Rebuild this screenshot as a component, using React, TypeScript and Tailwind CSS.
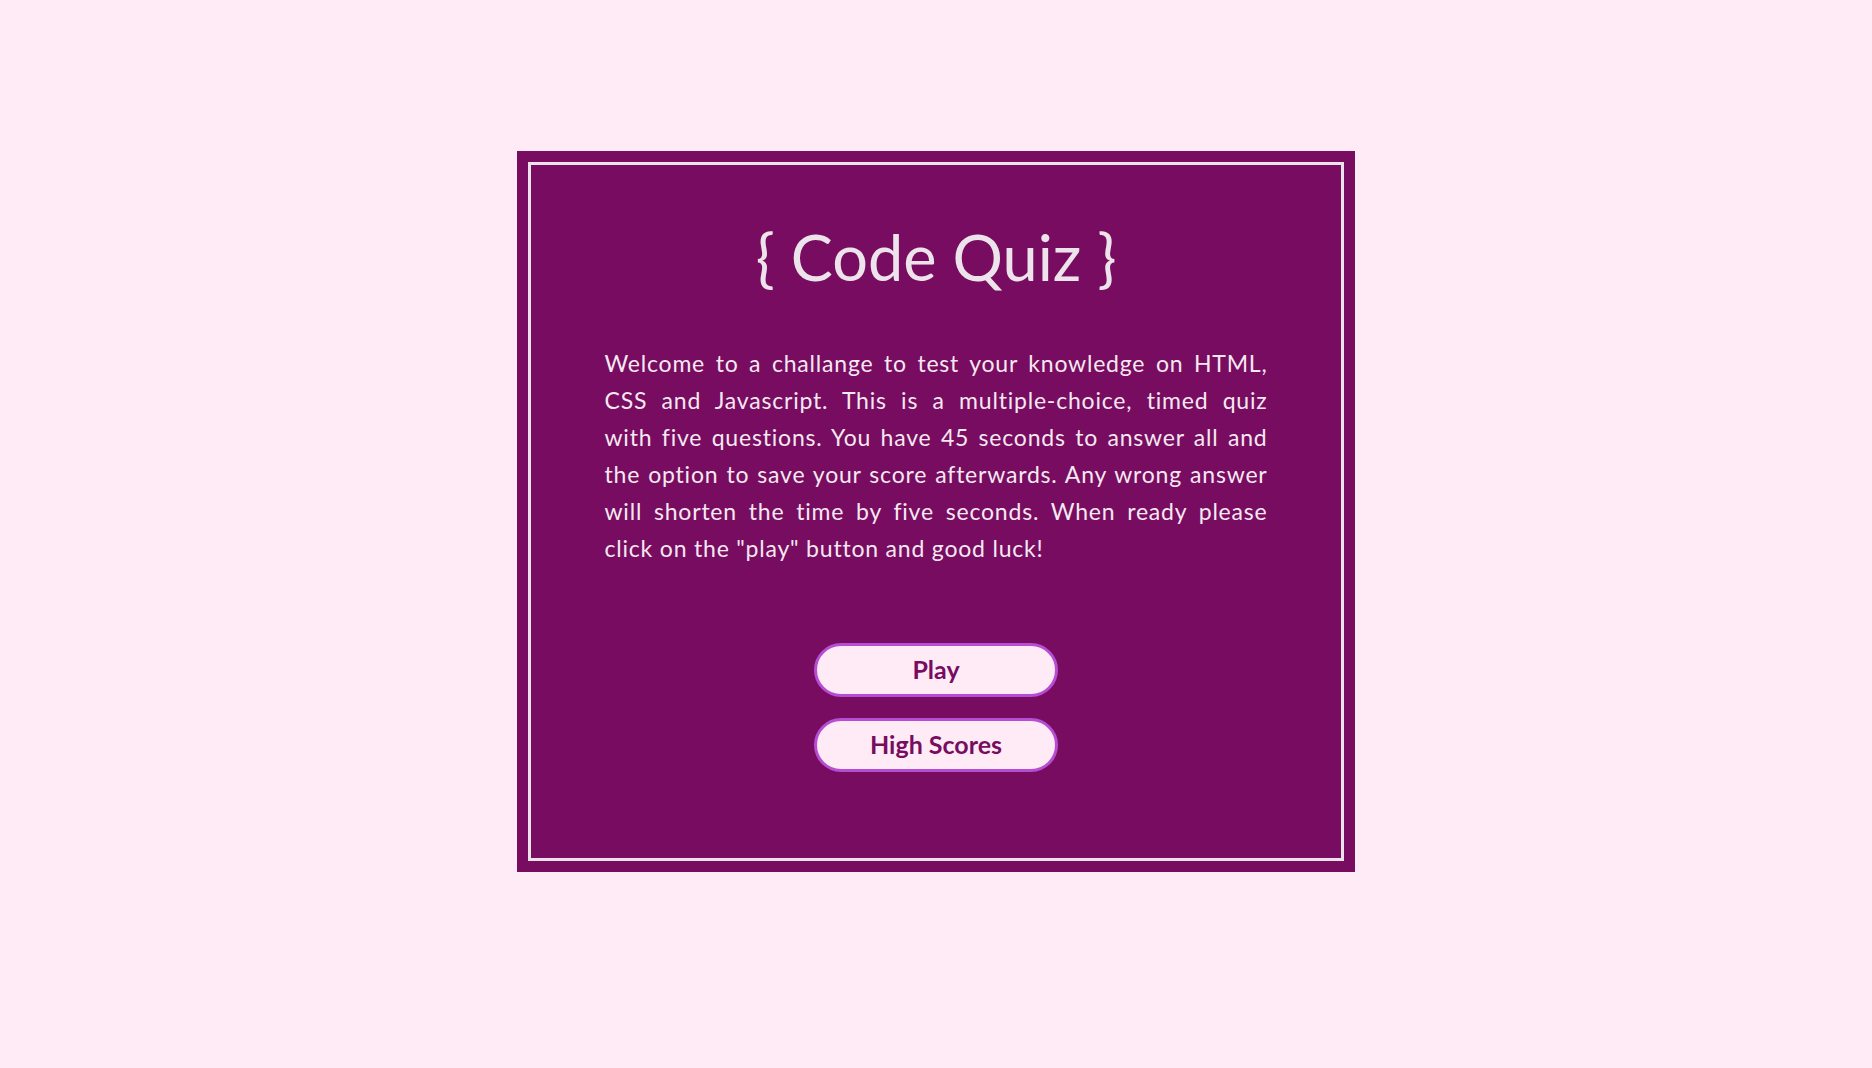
import React from 'react';

// Lines broken as in the design so the justified block wraps the same way
const INTRO_LINES = [
  'Welcome to a challange to test your knowledge on HTML,',
  'CSS and Javascript. This is a multiple-choice, timed quiz',
  'with five questions. You have 45 seconds to answer all and',
  'the option to save your score afterwards. Any wrong answer',
  'will shorten the time by five seconds. When ready please',
  'click on the "play" button and good luck!',
];

export default function App() {
  return (
    <div className="min-h-screen w-full bg-[#ffebf6] flex justify-center pt-[151px] font-['Lato',sans-serif]">
      <div className="w-[838px] h-[721px] bg-[#770c60] p-[11px]">
        {/* Inner frame */}
        <div className="h-full border-[3px] border-[#ece2ea] flex flex-col items-center">
          <h1 className="mt-[54px] text-[63px] leading-[1.2] text-[#ede3ea]">{'{ Code Quiz }'}</h1>

          <div className="mt-[50px] w-[663px] text-[23px] leading-[37px] tracking-[0.8px] text-[#f6e8f1]">
            {INTRO_LINES.map((line, i) => (
              <p
                key={i}
                className={i < INTRO_LINES.length - 1 ? 'text-justify [text-align-last:justify]' : 'text-left'}
              >
                {line}
              </p>
            ))}
          </div>

          <div className="mt-[76px] flex flex-col items-center gap-[21px]">
            <button className="w-[244px] h-[54px] rounded-full bg-[#ffebf6] border-[3px] border-[#b64ed4] text-[#770c60] text-[25px] font-bold">
              Play
            </button>
            <button className="w-[244px] h-[54px] rounded-full bg-[#ffebf6] border-[3px] border-[#b64ed4] text-[#770c60] text-[25px] font-bold">
              High Scores
            </button>
          </div>
        </div>
      </div>
    </div>
  );
}
